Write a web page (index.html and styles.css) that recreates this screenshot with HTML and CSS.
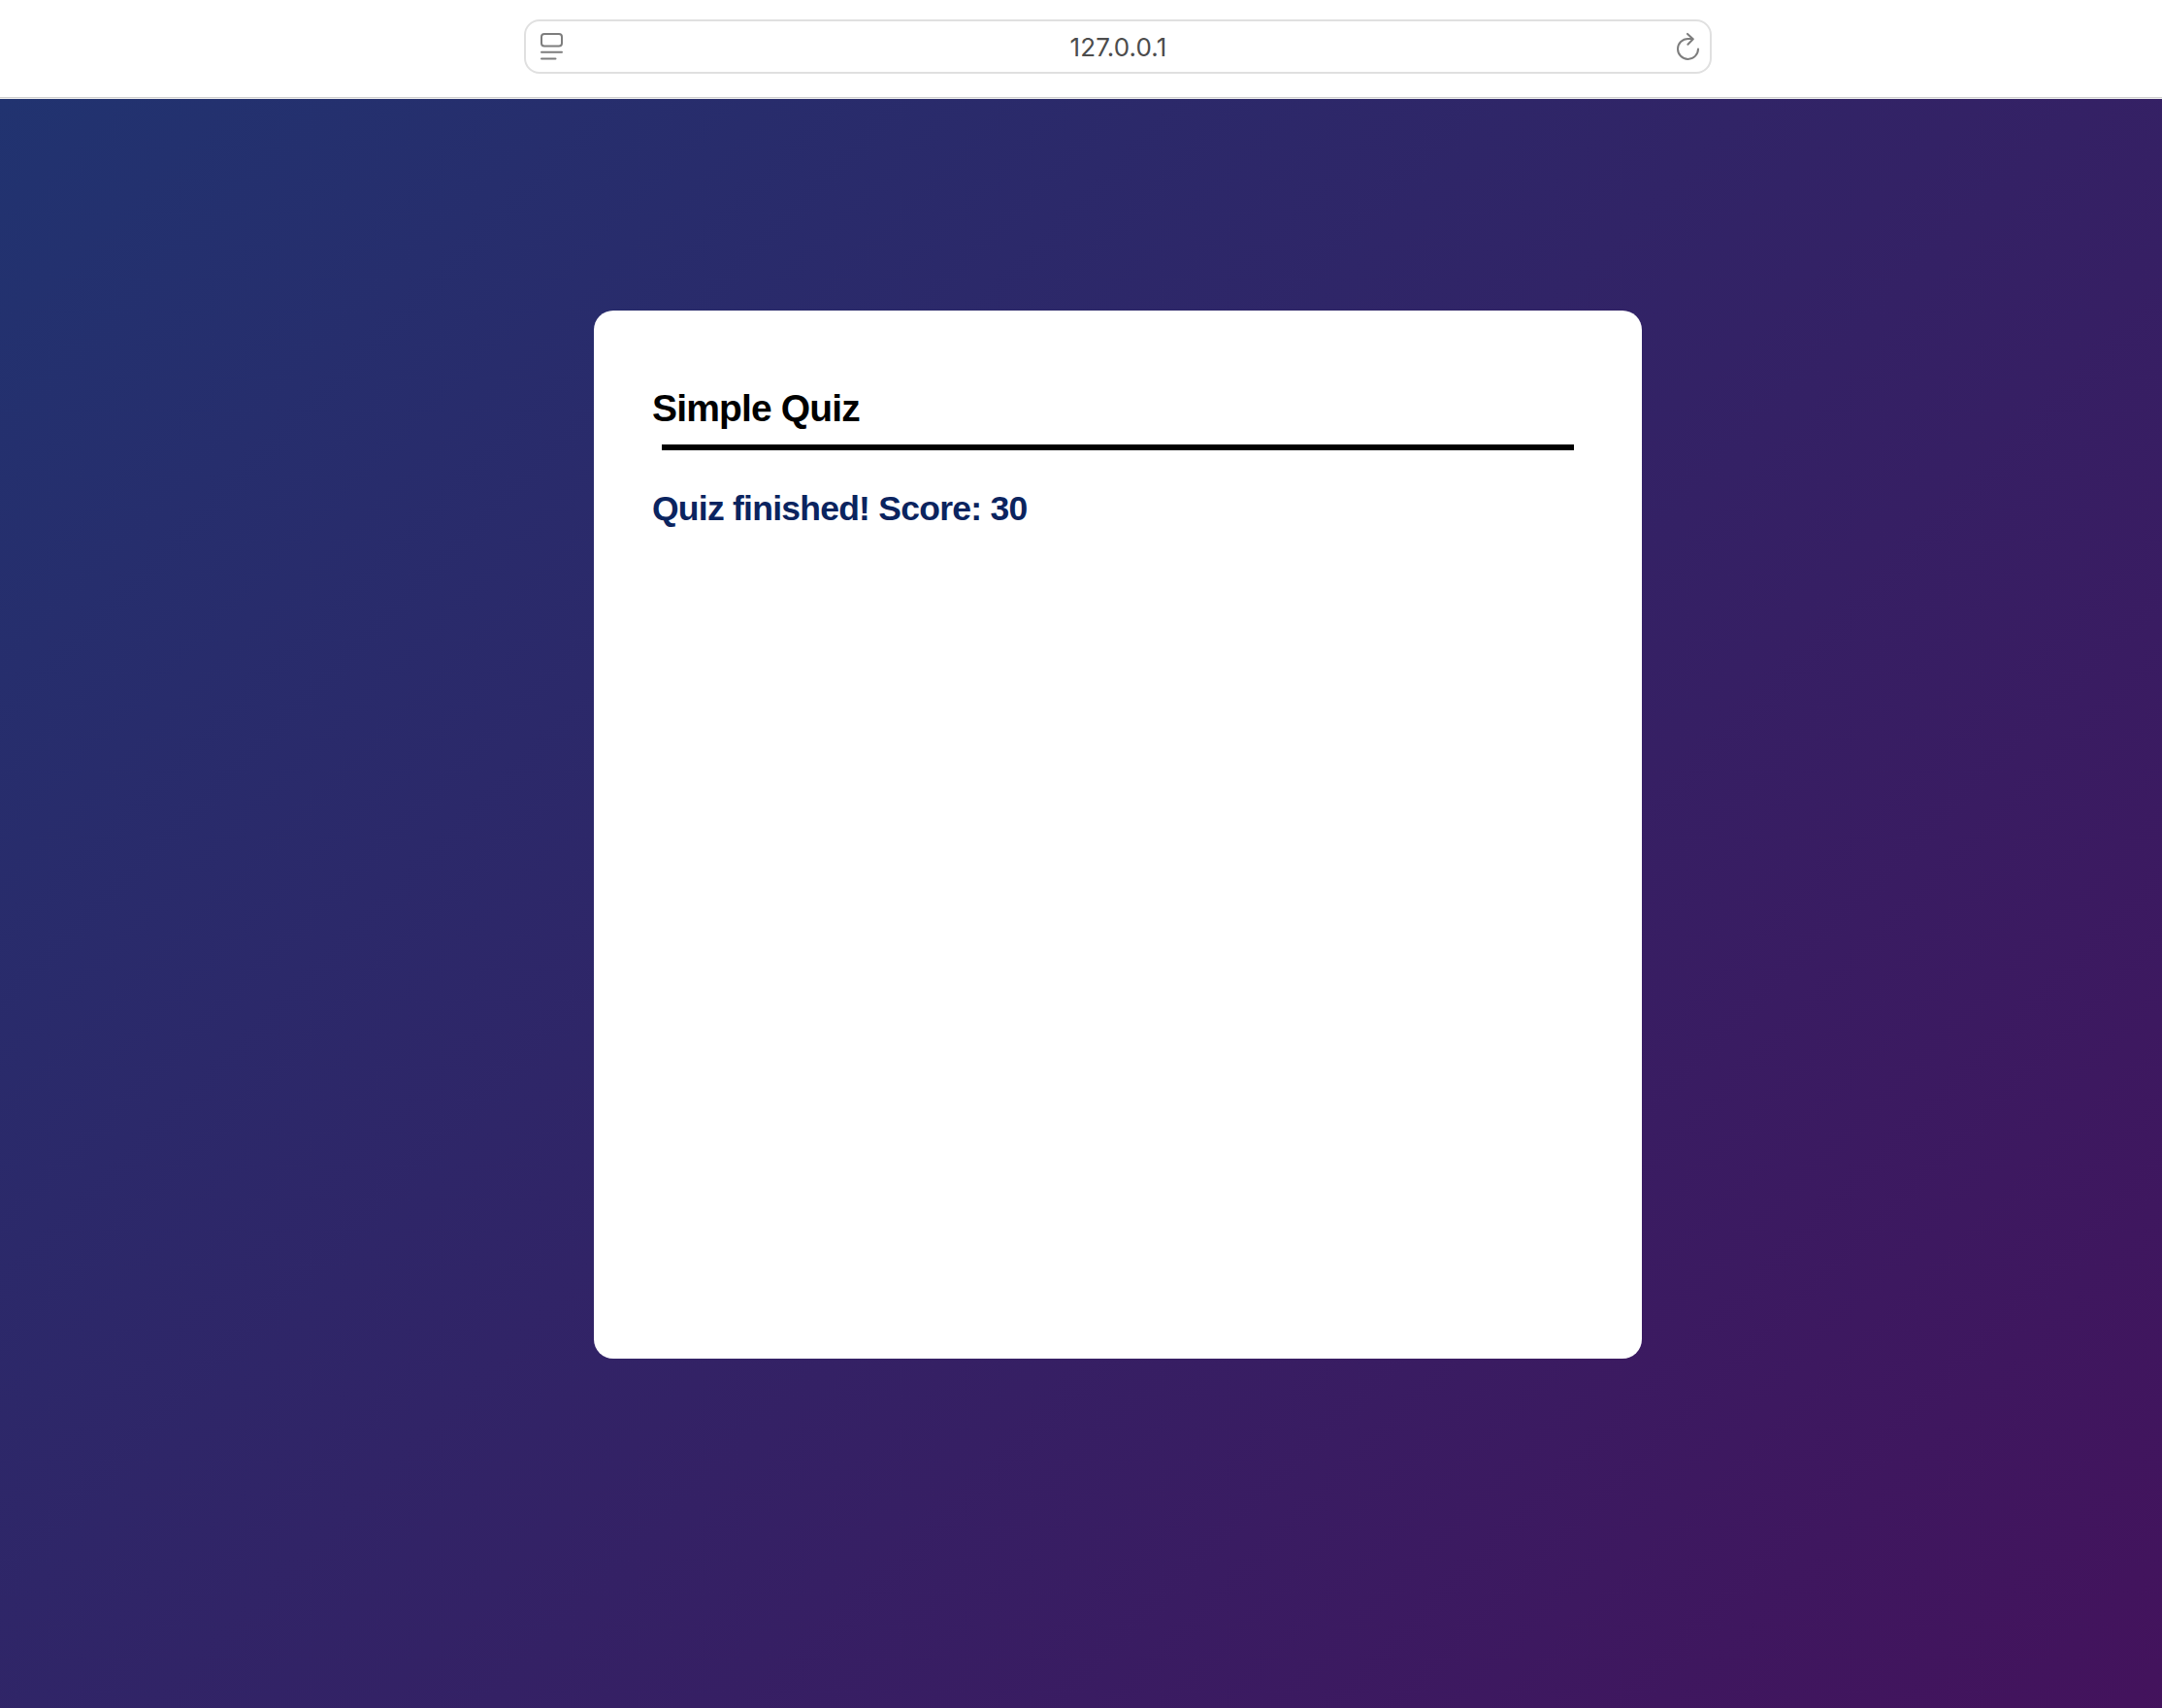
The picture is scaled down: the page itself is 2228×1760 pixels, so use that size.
FILE: index.html
```html
<!DOCTYPE html>
<html lang="en">
<head>
<meta charset="utf-8">
<title>Simple Quiz</title>
<link rel="stylesheet" href="styles.css">
</head>
<body>
<header class="toolbar">
  <div class="address">
    <svg class="icon-page" width="24" height="30" viewBox="0 0 24 30" fill="none" stroke="#7d7d7d" stroke-width="2" stroke-linecap="round">
      <rect x="1" y="1.9" width="21" height="12.6" rx="3"/>
      <path d="M1 20.8H22M1 27.5H15.5"/>
    </svg>
    <span class="host">127.0.0.1</span>
    <svg class="icon-reload" width="24" height="30" viewBox="0 0 24 30" fill="none" stroke="#7d7d7d" stroke-width="2" stroke-linecap="round" stroke-linejoin="round">
      <path d="M22 17.5A10.5 10.5 0 1 1 11.5 6.9H16.5M11 1.9L16.8 7.3L11.4 12.8"/>
    </svg>
  </div>
</header>
<main class="page">
  <section class="card">
    <h1 class="title">Simple Quiz</h1>
    <div class="rule"></div>
    <h2 class="result">Quiz finished! Score: 30</h2>
  </section>
</main>
</body>
</html>
```
FILE: styles.css
```css
* { box-sizing: border-box; }
body {
  margin: 0;
  width: 2228px;
  height: 1760px;
  overflow: hidden;
  font-family: "Liberation Sans", Arial, sans-serif;
}
.toolbar {
  height: 102px;
  padding-top: 20px;
  padding-left: 540px;
  background: #fff;
  border-bottom: 1px solid #ececec;
  box-shadow: inset 0 -1px #cfcfcf;
}
.address {
  display: flex;
  align-items: center;
  width: 1224px;
  height: 56px;
  padding: 0 10px 0 15px;
  border: 2px solid #e0e0e0;
  border-radius: 16px;
}
.host {
  flex: 1;
  padding-right: 4px;
  text-align: center;
  font-family: Inter, sans-serif;
  font-size: 26px;
  letter-spacing: 0.1px;
  color: #4c4c4c;
}
.page {
  width: 2304px;
  height: 1658px;
  padding-top: 218px;
  background: linear-gradient(135deg, #213370, #44125c);
}
.card {
  width: 1080px;
  height: 1080px;
  margin: 0 auto;
  padding: 80px 60px;
  background: #fff;
  border-radius: 20px;
}
.title {
  margin: 0;
  font-size: 39px;
  line-height: 42px;
  letter-spacing: -0.85px;
  color: #000;
}
.rule {
  height: 6px;
  margin: 16px 10px 0;
  background: #000;
}
.result {
  margin: 41px 0 0;
  font-size: 35.5px;
  line-height: 39px;
  letter-spacing: -0.75px;
  color: #0b245f;
}
```
